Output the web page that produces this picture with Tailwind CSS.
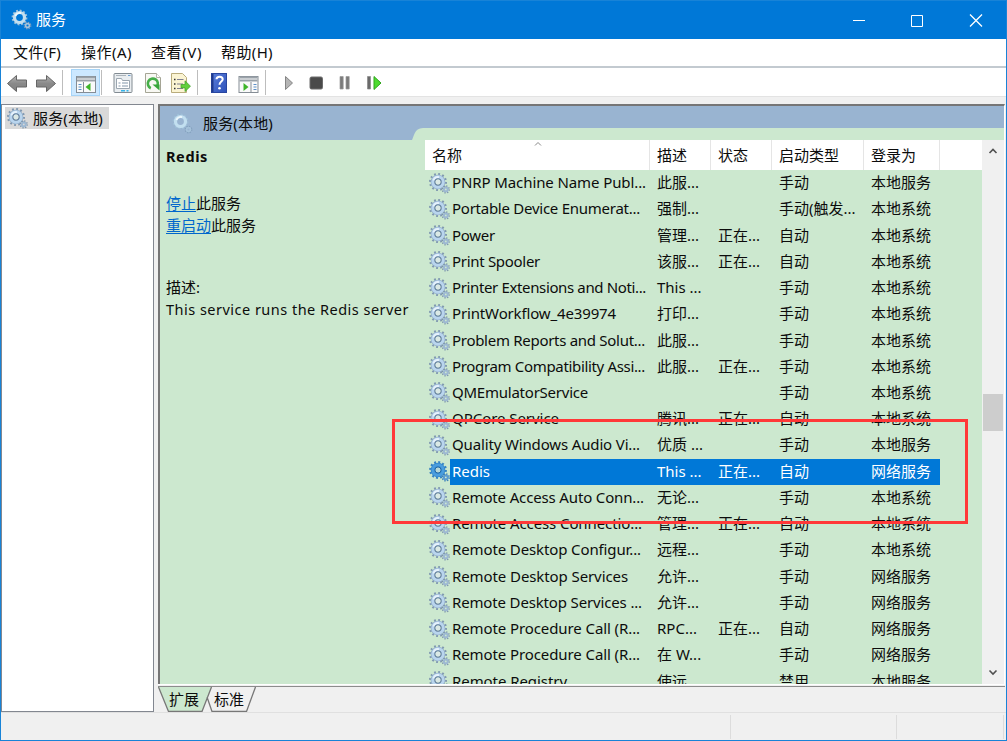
<!DOCTYPE html>
<html lang="zh-CN">
<head>
  <meta charset="UTF-8">
  <meta name="viewport" content="width=device-width, initial-scale=1.0">
  <title>服务</title>
  <script src="https://cdn.jsdelivr.net/npm/@tailwindcss/browser@4"></script>
</head>
<body class="w-[1007px] h-[741px] overflow-hidden font-['Noto_Sans','Noto_Sans_CJK_SC',sans-serif] text-[15px] leading-[20px] text-[#0c0c0c]">

  <!-- shared icons -->
  <svg class="absolute w-0 h-0">
    <symbol id="gear" viewBox="0 0 21 21">
      <circle cx="9" cy="9" r="7.8" fill="none" stroke="#7f97b0" stroke-width="2.4" stroke-dasharray="1.8 2.28"/>
      <circle cx="9" cy="9" r="5.2" fill="none" stroke="#8fabc6" stroke-width="4.2"/>
      <circle cx="9" cy="9" r="5.1" fill="none" stroke="#b9d5ee" stroke-width="3.2"/>
      <path d="M4.600 7.500A4.900 4.900 0 0 1 10 4.200" fill="none" stroke="#e6f2fc" stroke-width="2"/>
      <circle cx="9" cy="9" r="3.100" fill="none" stroke="#6b86a2" stroke-width="1.200"/>
      <circle cx="9" cy="9" r="2.400" fill="#dbe9e6"/>
      <circle cx="16.800" cy="16.400" r="3.300" fill="none" stroke="#7c93aa" stroke-width="1.800" stroke-dasharray="1.200 1.390"/>
      <circle cx="16.800" cy="16.400" r="1.900" fill="none" stroke="#9db8d2" stroke-width="2"/>
    </symbol>
    <symbol id="gear-on" viewBox="0 0 21 21">
      <circle cx="9" cy="9" r="7.600" fill="none" stroke="#3582c2" stroke-width="2.600" stroke-dasharray="1.900 2.080"/>
      <circle cx="9" cy="9" r="5.100" fill="none" stroke="#3286cb" stroke-width="4.400"/>
      <circle cx="9" cy="9" r="5.200" fill="none" stroke="#4a9dde" stroke-width="2.800"/>
      <circle cx="9" cy="9" r="3" fill="none" stroke="#2268a8" stroke-width="1"/>
      <circle cx="9" cy="9" r="2.300" fill="#b5d6da"/>
      <circle cx="16.800" cy="16.400" r="3.300" fill="none" stroke="#3b7fb8" stroke-width="1.800" stroke-dasharray="1.300 1.290"/>
      <circle cx="16.800" cy="16.400" r="1.900" fill="none" stroke="#5b9bd0" stroke-width="2"/>
    </symbol>
    <symbol id="gear-soft" viewBox="0 0 21 21">
      <circle cx="8.500" cy="8.500" r="6.900" fill="none" stroke="#9fc0d8" stroke-width="2" stroke-dasharray="1.900 1.710"/>
      <circle cx="8.500" cy="8.500" r="5" fill="none" stroke="#c2dff0" stroke-width="3.200"/>
      <path d="M4.400 7A4.600 4.600 0 0 1 10 4.100" fill="none" stroke="#eef8fd" stroke-width="1.800"/>
      <circle cx="16.500" cy="16.500" r="3" fill="none" stroke="#83a0bd" stroke-width="1.800" stroke-dasharray="1.200 1.160"/>
      <circle cx="16.500" cy="16.500" r="1.900" fill="none" stroke="#a5c2da" stroke-width="1.600"/>
    </symbol>
    <linearGradient id="grey" x1="0" y1="0" x2="0" y2="1">
      <stop offset="0" stop-color="#b4b4b4"/><stop offset=".5" stop-color="#8a8a8a"/><stop offset="1" stop-color="#808080"/>
    </linearGradient>
    <linearGradient id="blue" x1="0" y1="0" x2="1" y2="1">
      <stop offset="0" stop-color="#5b7fdb"/><stop offset="1" stop-color="#2c50b8"/>
    </linearGradient>
  </svg>

  <div class="relative w-full h-full flex flex-col bg-[#f0f0f0] border border-[#1883d7]">

    <!-- title bar -->
    <header class="h-[38px] shrink-0 bg-[#0078d7] text-white flex items-center pl-[10px]">
      <svg class="w-[21px] h-[21px] -mt-px"><use href="#gear-soft"/></svg>
      <span class="ml-[4px] -mt-[2px]">服务</span>
      <svg class="ml-auto mr-[22px] w-[132px] h-[14px]" viewBox="0 0 132 14" fill="none" stroke="#fff">
        <path d="M1 7.500h12M59.500 2.500h11v11h-11z"/>
        <path d="M118 1.500l12 12M130 1.500l-12 12" stroke-width="1.300"/>
      </svg>
    </header>

    <!-- menu -->
    <nav class="h-[27px] shrink-0 bg-white flex items-center pl-[12px] pb-[2px] gap-[19px]">
      <span class="w-[49px] whitespace-nowrap" data-fit="48">文件(F)</span>
      <span class="w-[51px] whitespace-nowrap" data-fit="51">操作(A)</span>
      <span class="w-[51px] whitespace-nowrap" data-fit="51">查看(V)</span>
      <span class="w-[52px] whitespace-nowrap" data-fit="52">帮助(H)</span>
    </nav>

    <!-- toolbar -->
    <div class="h-[31px] shrink-0 bg-white border-t-2 border-t-[#c3cad0] border-b border-b-[#e3e3e3]">
      <svg class="w-[390px] h-[28px]" viewBox="1 68 390 28">
        <g fill="url(#grey)" stroke="#666">
          <path d="M7.500 83.500l9-8v4.500h10v7h-10v4.500z"/>
          <path d="M55.500 83.500l-9-8v4.500h-10v7h10v4.500z"/>
        </g>
        <path d="M62.500 70v25M101.500 70v25M197.500 70v25M265.500 70v25" stroke="#bdbdbd"/>
        <rect x="71.500" y="69.500" width="28" height="26" fill="#cce8ff" stroke="#a6d4f7"/>
        <!-- console tree toggle -->
        <rect x="76.500" y="76.500" width="19" height="16" fill="#fafafa" stroke="#858d95"/>
        <path d="M77 77.500h18M77 80.500h18" stroke="#9aa2a9" stroke-width="2"/>
        <path d="M83.500 82v10" stroke="#858d95"/>
        <path d="M78.500 84.500h3M78.500 87h3M78.500 89.500h3" stroke="#5a8fc8" stroke-width="1.200"/>
        <path d="M90.500 83v8l-5-4z" fill="#3fb52a"/>
        <!-- properties -->
        <rect x="114" y="73.500" width="18" height="19" rx="1" fill="#e9edf0" stroke="#828b92"/>
        <path d="M116 75.500h10" stroke="#abb3ba"/>
        <path d="M128 75.500h2.500" stroke="#6d9fd0"/>
        <path d="M116.500 78.500h5l1 2h7v8h-13z" fill="#fff" stroke="#9ba6b0"/>
        <path d="M118.500 83h2M122 83h6M118.500 86h2M122 86h6" stroke="#8397aa"/>
        <path d="M121 90.800h4M126.500 90.800h2" stroke="#35b4e8" stroke-width="1.600"/>
        <!-- refresh -->
        <path d="M145.500 73.500h11l4 4v15h-15z" fill="#f8f8f3" stroke="#a5a595"/>
        <path d="M156.500 73.500v4h4" fill="#fff" stroke="#b5b5a8"/>
        <path d="M150.800 88.200a5 5 0 1 1 6-1.500" fill="none" stroke="#45ae48" stroke-width="2.600"/>
        <path d="M152.500 84.500h7v6z" fill="#37a53a"/>
        <!-- export list -->
        <path d="M171.500 73.500h11l4 4v15h-15z" fill="#fbf4d3" stroke="#b9ac7c"/>
        <path d="M174 79.500h1.500M174 84h1.500M174 88.500h1.500" stroke="#333" stroke-width="1.500"/>
        <path d="M177 79.500h6.500M177 84h6M177 88.500h6" stroke="#7f7f8f"/>
        <path d="M181 84.500h4v-3.700l5.500 5.400-5.500 5.400v-3.700h-4z" fill="#62cf3c" stroke="#3f9f28" stroke-width=".7"/>
        <!-- help -->
        <rect x="211.500" y="73.500" width="15" height="19" fill="url(#blue)" stroke="#2846a0"/>
        <path d="M212.500 74v18" stroke="#203a8c" stroke-width="2"/>
        <path d="M216.500 79.300c.1-3.600 6.200-3.500 6.200-.1 0 2.400-3.200 2.500-3.200 5.600" fill="none" stroke="#fff" stroke-width="2"/>
        <circle cx="219.500" cy="88.300" r="1.300" fill="#fff"/>
        <!-- action pane toggle -->
        <rect x="239" y="76.500" width="19" height="16" fill="#fafafa" stroke="#858d95"/>
        <path d="M239.500 77.500h18M239.500 80.500h18" stroke="#9aa2a9" stroke-width="2"/>
        <path d="M251 82v10" stroke="#858d95"/>
        <path d="M253.500 84.500h3M253.500 87h3M253.500 89.500h3" stroke="#5a8fc8" stroke-width="1.200"/>
        <path d="M243.500 83v8l5-4z" fill="#3fb52a"/>
        <!-- service controls -->
        <path d="M285.500 76.500v13l7-6.500z" fill="#b5b5b5" stroke="#858585"/>
        <rect x="310" y="77" width="12.500" height="12" rx="1.500" fill="#4a4a4a" stroke="#6c6c6c"/>
        <path d="M340 76.500h3.200v12.500h-3.200zM346 76.500h3.200v12.500h-3.200z" fill="#7a7a7a" stroke="#999" stroke-width=".7"/>
        <path d="M367.500 76.500h3v12.500h-3z" fill="#6a6a6a" stroke="#888" stroke-width=".7"/>
        <path d="M374 76.500v13l7-6.500z" fill="#4ddb2f" stroke="#2fa51c"/>
      </svg>
    </div>

    <!-- panes -->
    <main class="h-[615px] shrink-0 flex pt-[7px]">
      <aside class="w-[153px] h-[608px] bg-white border border-[#828790] pt-[2px] pl-[3px]">
        <div class="w-[104px] h-[22px] bg-[#d9d9d9] flex items-center">
          <svg class="w-[21px] h-[21px] ml-[2px]"><use href="#gear"/></svg>
          <span class="ml-[5px] whitespace-nowrap" data-fit="70">服务(本地)</span>
        </div>
      </aside>

      <section class="ml-[4px] w-[847px] flex flex-col">
        <div class="h-[580px] border-t-2 border-l-2 border-[#767676] bg-[#cce8cf] border-r border-r-white flex flex-col">
          <div class="relative h-[34px] shrink-0 bg-[#99b4d1] flex items-center pl-[12px]">
            <svg class="w-[21px] h-[21px]"><use href="#gear-soft"/></svg>
            <span class="ml-[10px] whitespace-nowrap" data-fit="70">服务(本地)</span>
            <svg class="absolute right-0 bottom-0 w-[592px] h-[12px]" viewBox="0 0 592 12"><path d="M0 12C2 9 2 0 11 0H592V12z" fill="#cce8cf"/></svg>
          </div>

          <div class="h-[544px] flex overflow-hidden">
            <!-- selected service details -->
            <div class="w-[265px] shrink-0 pl-[6px] pt-[6px] whitespace-nowrap">
              <h2 class="font-bold text-[14.5px]"><span data-fit="42">Redis</span></h2>
              <p class="mt-[26px] leading-[22px]"><a class="text-[#0066cc] underline underline-offset-2">停止</a>此服务<br><a class="text-[#0066cc] underline underline-offset-2">重启动</a>此服务</p>
              <p class="mt-[41px] leading-[21.500px]">描述:<br><span class="text-[14.5px]" data-fit="243">This service runs the Redis server</span></p>
            </div>

            <!-- service list -->
            <div class="w-[557px] shrink-0">
              <div class="relative h-[30px] bg-white flex items-center [&>span]:h-full [&>span]:border-r [&>span]:border-[#e5e5e5] [&>span]:pl-[7px] [&>span]:pt-[5px]">
                <span class="w-[225px]">名称</span>
                <span class="w-[61px]">描述</span>
                <span class="w-[61px]">状态</span>
                <span class="w-[92px]">启动类型</span>
                <span class="w-[76px]">登录为</span>
                <svg class="absolute left-[109px] top-[2px] w-[8px] h-[4px]" fill="none" stroke="#888"><path d="M1 3.500l3-3 3 3"/></svg>
              </div>
              <div id="list"></div>
            </div>

            <!-- scrollbar -->
            <div class="w-[22px] shrink-0 bg-[#f0f0f0] flex flex-col items-center">
              <svg class="w-[10px] h-[8px] mt-[7px]" fill="none" stroke="#505050" stroke-width="1.600"><path d="M1.500 6l3.500-3.500 3.500 3.500"/></svg>
              <div class="mt-[239px] w-[20px] h-[37px] bg-[#cdcdcd]"></div>
              <svg class="w-[10px] h-[8px] mt-auto mb-[7px]" fill="none" stroke="#505050" stroke-width="1.600"><path d="M1.500 1.500l3.500 3.500 3.500-3.500"/></svg>
            </div>
          </div>
        </div>

        <!-- bottom tabs -->
        <div class="relative h-[28px] border-t border-white">
          <svg class="absolute left-0 top-0 w-[847px] h-[27px]" viewBox="158 685 847 27" fill="none" stroke="#777">
            <path d="M158 686.500h847" stroke="#8c8c8c"/>
            <path d="M158.500 687l10 24.500h33.500l9.500-24.500z" fill="#cce8cf" stroke="none"/>
            <path d="M158.500 687l10 24.500h33.500l9.500-24.500M207 697l5 14.500h34.500l9-24.500" stroke-width="1.300"/>
          </svg>
          <div class="relative flex pl-[11px] pt-[4px] gap-[15px]"><span>扩展</span><span>标准</span></div>
        </div>
      </section>
    </main>

    <!-- status bar -->
    <footer class="flex-1 flex border-t border-[#e0e0e0] pt-[2px] pb-px">
      <div class="w-[730px] border-r border-[#dcdcdc]"></div>
      <div class="w-[166px] border-r border-[#dcdcdc]"></div>
      <div class="w-[107px] border-r border-[#dcdcdc]"></div>
    </footer>

    <!-- highlight frame over the selected row -->
    <div class="absolute left-[391px] top-[418px] w-[576px] h-[105px] border-3 border-[#ff3838]"></div>
  </div>

  <script>
    // name, description, status, startup type, log on as, name width
    const services = [
      ['PNRP Machine Name Publ...', '此服...', '', '手动', '本地服务', 194],
      ['Portable Device Enumerat...', '强制...', '', '手动(触发...', '本地系统', 188],
      ['Power', '管理...', '正在...', '自动', '本地系统', 43],
      ['Print Spooler', '该服...', '正在...', '自动', '本地系统', 88],
      ['Printer Extensions and Noti...', 'This ...', '', '手动', '本地系统', 194],
      ['PrintWorkflow_4e39974', '打印...', '', '手动', '本地系统', 164],
      ['Problem Reports and Solut...', '此服...', '', '手动', '本地系统', 193],
      ['Program Compatibility Assi...', '此服...', '正在...', '手动', '本地系统', 193],
      ['QMEmulatorService', '', '', '手动', '本地系统', 136],
      ['QPCore Service', '腾讯...', '正在...', '自动', '本地系统', 107],
      ['Quality Windows Audio Vi...', '优质 ...', '', '手动', '本地服务', 188],
      ['Redis', 'This ...', '正在...', '自动', '网络服务', 38],
      ['Remote Access Auto Conn...', '无论...', '', '手动', '本地系统', 192],
      ['Remote Access Connectio...', '管理...', '正在...', '自动', '本地系统', 190],
      ['Remote Desktop Configur...', '远程...', '', '手动', '本地系统', 189],
      ['Remote Desktop Services', '允许...', '', '手动', '网络服务', 176],
      ['Remote Desktop Services ...', '允许...', '', '手动', '网络服务', 190],
      ['Remote Procedure Call (R...', 'RPC...', '正在...', '自动', '网络服务', 188],
      ['Remote Procedure Call (R...', '在 W...', '', '手动', '网络服务', 188],
      ['Remote Registry', '使远...', '', '禁用', '本地服务', 115],
    ];

    const list = document.getElementById('list');
    services.forEach(([name, desc, status, type, logon, width]) => {
      const on = name === 'Redis';
      const row = document.createElement('div');
      row.className = 'h-[26.24px] flex items-center pl-[4px] whitespace-nowrap';
      row.innerHTML = `
        <svg class="w-[21px] h-[21px] shrink-0"><use href="${on ? '#gear-on' : '#gear'}"/></svg>
        <div class="${on ? 'h-full w-[490px] flex items-center pb-[2px] bg-[#0078d7] text-white' : 'h-full w-[490px] flex items-center pb-[2px]'}">
          <span class="w-[207px] pl-[2px]"><span data-fit="${width}">${name}</span></span>
          <span class="w-[61px]">${desc}</span>
          <span class="w-[61px]">${status}</span>
          <span class="w-[92px]">${type}</span>
          <span>${logon}</span>
        </div>`;
      list.appendChild(row);
    });

    // set the letter spacing so that each label takes its given width
    function fit(el) {
      const target = Number(el.dataset.fit);
      const count = el.textContent.length;
      const range = document.createRange();
      range.selectNodeContents(el);
      let spacing = 0;
      for (let i = 0; i < 5; i++) {
        spacing += (target - range.getBoundingClientRect().width) / count;
        el.style.letterSpacing = `${spacing}px`;
      }
    }

    function fitAll() {
      document.querySelectorAll('[data-fit]').forEach(el => {
        el.style.letterSpacing = '0px';
        fit(el);
      });
    }
    fitAll();
    window.addEventListener('load', fitAll);
  </script>
</body>
</html>
